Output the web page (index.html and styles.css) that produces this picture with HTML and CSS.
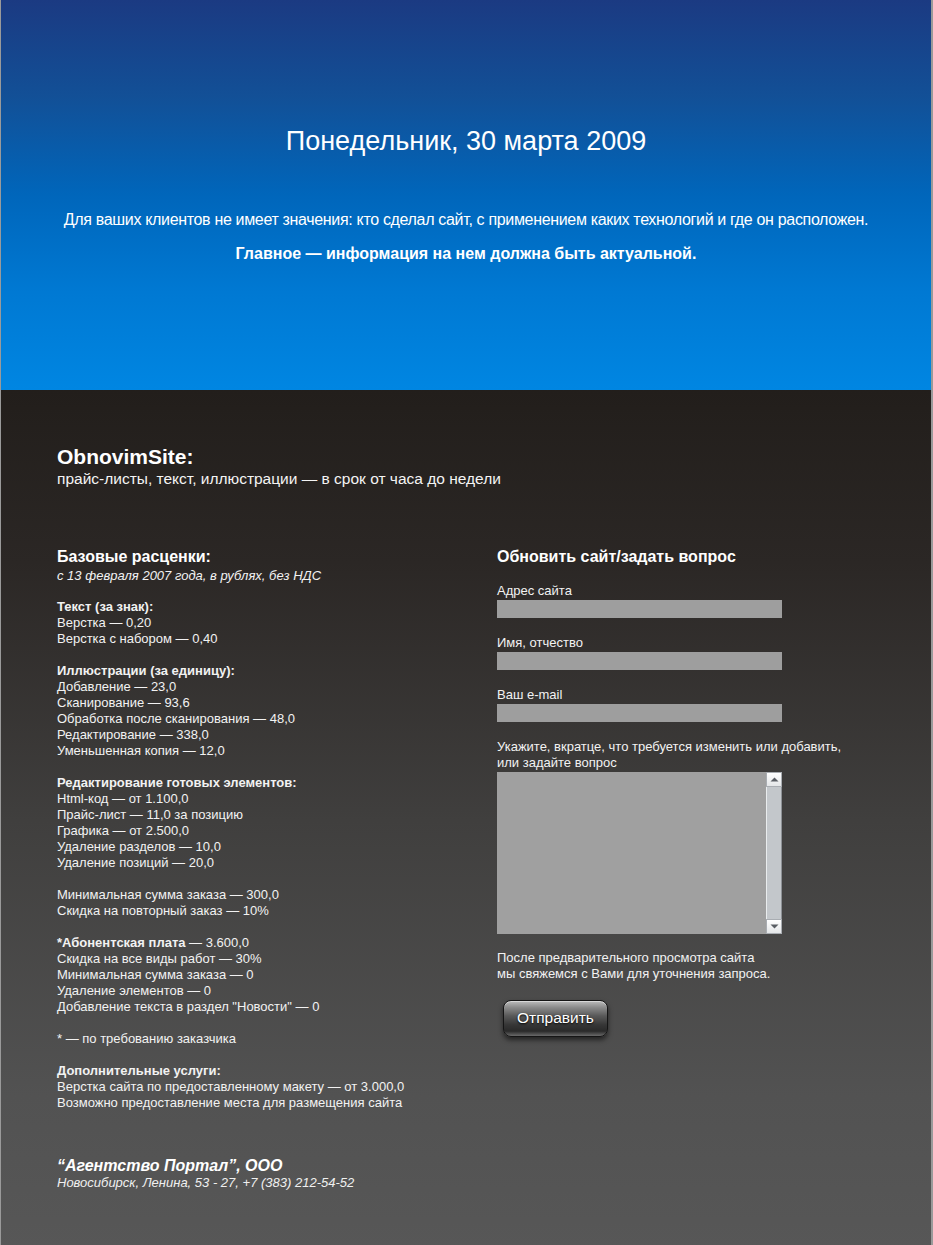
FILE: index.html
```html
<!DOCTYPE html>
<html lang="ru">
<head>
<meta charset="utf-8">
<title>ObnovimSite</title>
<link rel="stylesheet" href="styles.css">
</head>
<body>
<div class="page">
  <header class="hero">
    <h1 class="hero-date">Понедельник, 30 марта 2009</h1>
    <p class="hero-lead">Для ваших клиентов не имеет значения: кто сделал сайт, с применением каких технологий и где он расположен.</p>
    <p class="hero-main">Главное — информация на нем должна быть актуальной.</p>
  </header>

  <main class="content">
    <div class="brand">
      <div class="brand-name">ObnovimSite:</div>
      <div class="brand-tag">прайс-листы, текст, иллюстрации — в срок от часа до недели</div>
    </div>

    <div class="columns">
      <section class="prices">
        <h2 class="col-title">Базовые расценки:</h2>
        <p class="note">с 13 февраля 2007 года, в рублях, без НДС</p>

        <p class="group"><b>Текст (за знак):</b><br>
        Верстка — 0,20<br>
        Верстка с набором — 0,40</p>

        <p class="group"><b>Иллюстрации (за единицу):</b><br>
        Добавление — 23,0<br>
        Сканирование — 93,6<br>
        Обработка после сканирования — 48,0<br>
        Редактирование — 338,0<br>
        Уменьшенная копия — 12,0</p>

        <p class="group"><b>Редактирование готовых элементов:</b><br>
        Html-код — от 1.100,0<br>
        Прайс-лист — 11,0 за позицию<br>
        Графика — от 2.500,0<br>
        Удаление разделов — 10,0<br>
        Удаление позиций — 20,0</p>

        <p class="group">Минимальная сумма заказа — 300,0<br>
        Скидка на повторный заказ — 10%</p>

        <p class="group"><b>*Абонентская плата</b> — 3.600,0<br>
        Скидка на все виды работ — 30%<br>
        Минимальная сумма заказа — 0<br>
        Удаление элементов — 0<br>
        Добавление текста в раздел "Новости" — 0</p>

        <p class="group">* — по требованию заказчика</p>

        <p class="group"><b>Дополнительные услуги:</b><br>
        Верстка сайта по предоставленному макету — от 3.000,0<br>
        Возможно предоставление места для размещения сайта</p>
      </section>

      <section class="order">
        <h2 class="col-title">Обновить сайт/задать вопрос</h2>
        <form class="form">
          <label class="field">
            <span class="field-label">Адрес сайта</span>
            <input class="field-input" type="text">
          </label>
          <label class="field">
            <span class="field-label">Имя, отчество</span>
            <input class="field-input" type="text">
          </label>
          <label class="field">
            <span class="field-label">Ваш e-mail</span>
            <input class="field-input" type="text">
          </label>
          <label class="field">
            <span class="field-label">Укажите, вкратце, что требуется изменить или добавить,<br>или задайте вопрос</span>
            <span class="area">
              <textarea class="area-input"></textarea>
              <span class="scroll">
                <span class="scroll-btn">
                  <svg width="9" height="5" viewBox="0 0 9 5"><path d="M0.5 4.5 L4.5 0.5 L8.5 4.5 Z" fill="#5a5e64"/></svg>
                </span>
                <span class="scroll-track"></span>
                <span class="scroll-btn">
                  <svg width="9" height="5" viewBox="0 0 9 5"><path d="M0.5 0.5 L4.5 4.5 L8.5 0.5 Z" fill="#5a5e64"/></svg>
                </span>
              </span>
            </span>
          </label>
          <p class="form-note">После предварительного просмотра сайта<br>мы свяжемся с Вами для уточнения запроса.</p>
          <button class="send" type="button">Отправить</button>
        </form>
      </section>
    </div>

    <footer class="footer">
      <div class="footer-name">“Агентство Портал”, ООО</div>
      <div class="footer-addr">Новосибирск, Ленина, 53 - 27, +7 (383) 212-54-52</div>
    </footer>
  </main>
</div>
</body>
</html>
```

FILE: styles.css
```css
html, body {
  margin: 0;
  padding: 0;
}
body {
  background: #9a9a9a;
  font-family: "Liberation Sans", Arial, sans-serif;
  color: #f2f2f2;
}
.page {
  margin-left: 1px;
  width: 930px;
  min-height: 1245px;
  display: flex;
  flex-direction: column;
}

/* ---------- hero ---------- */
.hero {
  height: 390px;
  box-sizing: border-box;
  padding-top: 126px;
  text-align: center;
  background: linear-gradient(to bottom, #1b3a82 0%, #125097 25%, #0066bb 50%, #0079d3 75%, #0086e2 100%);
}
.hero-date {
  margin: 0;
  font-weight: normal;
  font-size: 27px;
  line-height: 31px;
  color: #ffffff;
}
.hero-lead {
  margin: 53px 0 0;
  font-size: 16px;
  line-height: 20px;
  letter-spacing: -0.33px;
  color: #ffffff;
}
.hero-main {
  margin: 14px 0 0;
  font-size: 16px;
  line-height: 20px;
  font-weight: bold;
  color: #ffffff;
}

/* ---------- content ---------- */
.content {
  flex: 1;
  padding: 55px 0 60px 56px;
  background: linear-gradient(to bottom, #221e1b 0%, #2b2725 20%, #403f3e 50%, #525252 82%, #575757 100%);
}
.brand-name {
  font-size: 21px;
  line-height: 24px;
  font-weight: bold;
  color: #ffffff;
}
.brand-tag {
  font-size: 15.5px;
  line-height: 19px;
  color: #f4f4f4;
}

.columns {
  display: flex;
  margin-top: 59px;
}
.prices {
  width: 440px;
}
.order {
  width: 380px;
}
.col-title {
  margin: 0;
  font-size: 16px;
  line-height: 19px;
  font-weight: bold;
  color: #ffffff;
}
.note {
  margin: 2px 0 15px;
  font-size: 13px;
  line-height: 16px;
  font-style: italic;
}
.group {
  margin: 0 0 16px;
  font-size: 13px;
  line-height: 16px;
}
.group:last-child {
  margin-bottom: 0;
}

/* ---------- form ---------- */
.form {
  display: flex;
  flex-direction: column;
  margin-top: 17px;
  gap: 17px;
}
.field {
  display: flex;
  flex-direction: column;
  gap: 1px;
}
.field-label {
  font-size: 13px;
  line-height: 16px;
}
.field-input {
  width: 285px;
  height: 18px;
  box-sizing: border-box;
  border: 0;
  margin: 0;
  padding: 0 3px;
  background: #9e9e9e;
  font: 13px "Liberation Sans", Arial, sans-serif;
}
.area {
  display: flex;
  width: 285px;
  height: 162px;
  background: #a0a0a0;
}
.area-input {
  flex: 1;
  border: 0;
  margin: 0;
  padding: 2px;
  resize: none;
  background: transparent;
  outline: none;
  font: 13px "Liberation Sans", Arial, sans-serif;
}
.scroll {
  width: 16px;
  display: flex;
  flex-direction: column;
  background: #c3c7cb;
  box-sizing: border-box;
  border-left: 1px solid #e9ecee;
  border-right: 1px solid #8d9196;
}
.scroll-btn {
  height: 15px;
  display: flex;
  align-items: center;
  justify-content: center;
  background: linear-gradient(to bottom, #ffffff, #e4e6e8);
  border: 1px solid #a9adb2;
  box-sizing: border-box;
  margin: 0 -1px;
}
.scroll-track {
  flex: 1;
}
.form-note {
  margin: -1px 0 0;
  font-size: 13px;
  line-height: 16px;
}
.send {
  align-self: flex-start;
  margin: 1px 0 0 6px;
  width: 105px;
  height: 37px;
  border: 1px solid #151515;
  border-radius: 8px;
  background: linear-gradient(to bottom, #bdbdbd 0%, #8c8c8c 18%, #5a5a5a 42%, #363636 68%, #2a2a2a 86%, #6a6a6a 100%);
  box-shadow: 0 3px 5px rgba(0, 0, 0, 0.55), inset 0 1px 0 rgba(255, 255, 255, 0.45);
  color: #ffffff;
  font: 15.5px "Liberation Sans", Arial, sans-serif;
  text-shadow: 0 1px 2px #000000;
  padding: 0 0 2px;
}

/* ---------- footer ---------- */
.footer {
  margin-top: 45px;
}
.footer-name {
  font-size: 16px;
  line-height: 19px;
  font-weight: bold;
  font-style: italic;
  color: #ffffff;
}
.footer-addr {
  font-size: 13px;
  line-height: 16px;
  font-style: italic;
  color: #f0f0f0;
}
```
